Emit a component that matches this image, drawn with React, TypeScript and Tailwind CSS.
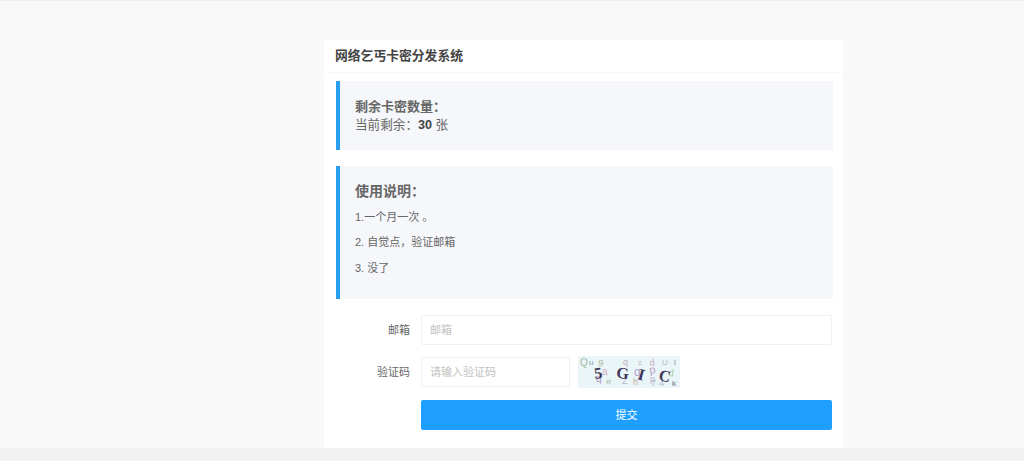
const font = "font-['Liberation_Sans','Noto_Sans_CJK_SC',sans-serif]";

const noise = [
  { x: 2, y: 10, t: 'Q', c: '#9db89f', s: 10, r: 0 },
  { x: 11, y: 9, t: 'u', c: '#8c8fb0', s: 8, r: 0 },
  { x: 20, y: 10, t: '9', c: '#a9b49a', s: 9, r: 5 },
  { x: 45, y: 9, t: 'q', c: '#c9a9b8', s: 9, r: 0 },
  { x: 60, y: 9, t: 'z', c: '#c9b9c4', s: 8, r: 0 },
  { x: 72, y: 10, t: 'd', c: '#c0a8c4', s: 9, r: -8 },
  { x: 84, y: 9, t: 'U', c: '#b5b5c9', s: 8, r: 0 },
  { x: 96, y: 9, t: 'l', c: '#8c8fa0', s: 8, r: 0 },
  { x: 24, y: 19, t: 'a', c: '#d6a9c0', s: 10, r: 0 },
  { x: 56, y: 20, t: 'q', c: '#b5a3cf', s: 12, r: 0 },
  { x: 72, y: 18, t: 'p', c: '#b99ac4', s: 11, r: -10 },
  { x: 90, y: 20, t: 'd', c: '#a8c9a0', s: 10, r: 5 },
  { x: 72, y: 26, t: 'p', c: '#c2b0d8', s: 9, r: 0 },
  { x: 18, y: 26, t: 'q', c: '#b39ac4', s: 10, r: 0 },
  { x: 28, y: 28, t: 'e', c: '#a9c4a9', s: 9, r: 5 },
  { x: 44, y: 28, t: 'Z', c: '#b5b5d0', s: 9, r: 0 },
  { x: 55, y: 29, t: 'h', c: '#c4b09a', s: 9, r: 0 },
  { x: 73, y: 30, t: '7', c: '#a8c0c9', s: 9, r: 0 },
  { x: 81, y: 30, t: '4', c: '#a8b8d0', s: 9, r: 0 },
  { x: 94, y: 30, t: 'k', c: '#6b6b80', s: 8, r: 0 },
];

const code = [
  { x: 17, y: 23, t: '5', r: -8 },
  { x: 38, y: 22, t: 'G', r: 5 },
  { x: 59, y: 23, t: 'I', r: 15 },
  { x: 80, y: 24, t: 'C', r: 12 },
];

function Captcha() {
  return (
    <svg width="102" height="32" viewBox="0 0 102 32" className="shrink-0 ml-2 bg-[#eaf5f8]">
      {noise.map((n, i) => (
        <text key={i} x={n.x} y={n.y} fill={n.c} fontSize={n.s} fontFamily="Liberation Sans, sans-serif" transform={`rotate(${n.r} ${n.x} ${n.y})`}>
          {n.t}
        </text>
      ))}
      {code.map((n, i) => (
        <text key={i} x={n.x} y={n.y} fill="#40365a" fontSize="16" fontWeight="700" fontFamily="Liberation Serif, serif" transform={`rotate(${n.r} ${n.x} ${n.y})`}>
          {n.t}
        </text>
      ))}
    </svg>
  );
}

export default function App() {
  return (
    <div className={`${font} h-[461px] w-[1024px] overflow-hidden bg-[#f9f9f9] flex flex-col text-[#666]`}>
      <div className="h-px bg-[#eeeeee] shrink-0" />
      <div className="flex-1 pt-[39px] pl-[324px]">
        <div className="w-[519px] h-[408px] bg-white">
          <div className="h-[33px] px-[11px] flex items-center border-b border-[#f8f8f8] text-[12.8px] font-bold text-[#444]">
            网络乞丐卡密分发系统
          </div>
          <div className="pl-[12px] pr-[10px] pt-[8px]">
            <div className="h-[69px] border-l-4 border-[#2b9fef] bg-[#f5f7fa] pl-[15px] pt-[17px] text-[13px] leading-[18px] text-[#666]">
              <div className="font-bold">剩余卡密数量：</div>
              <div className="text-[12.6px]">
                当前剩余：<span className="font-bold text-[#444]">30</span> 张
              </div>
            </div>
            <div className="mt-[16px] h-[133px] border-l-4 border-[#2b9fef] bg-[#f5f7fa] pl-[15px] pt-[16px] text-[#666]">
              <div className="text-[14px] leading-[18px] font-bold">使用说明：</div>
              <div className="mt-[8px] flex flex-col gap-[7.4px] text-[11px] leading-[18px]">
                <div>1.一个月一次 。</div>
                <div>2. 自觉点，验证邮箱</div>
                <div>3. 没了</div>
              </div>
            </div>
            <div className="mt-[16px] mr-px flex items-center h-[30px]">
              <label className="w-[74px] text-right text-[11px] text-[#666]">邮箱</label>
              <input
                placeholder="邮箱"
                className="ml-[11px] h-[30px] flex-1 border border-[#f0f0f0] rounded-[2px] px-[8px] text-[11px] placeholder:text-[#c2c2c2] outline-none"
              />
            </div>
            <div className="mt-[11px] flex items-center h-[32px]">
              <label className="w-[74px] text-right text-[11px] text-[#666]">验证码</label>
              <input
                placeholder="请输入验证码"
                className="ml-[11px] h-[30px] w-[149px] border border-[#f0f0f0] rounded-[2px] px-[8px] text-[11px] placeholder:text-[#c2c2c2] outline-none"
              />
              <Captcha />
            </div>
            <div className="mt-[12px] mr-px pl-[85px]">
              <button className="w-full h-[30px] rounded-[2px] bg-[#1e9fff] text-white text-[11px]">提交</button>
            </div>
          </div>
        </div>
      </div>
      <div className="h-[13px] bg-[#f2f2f2] shrink-0" />
    </div>
  );
}
